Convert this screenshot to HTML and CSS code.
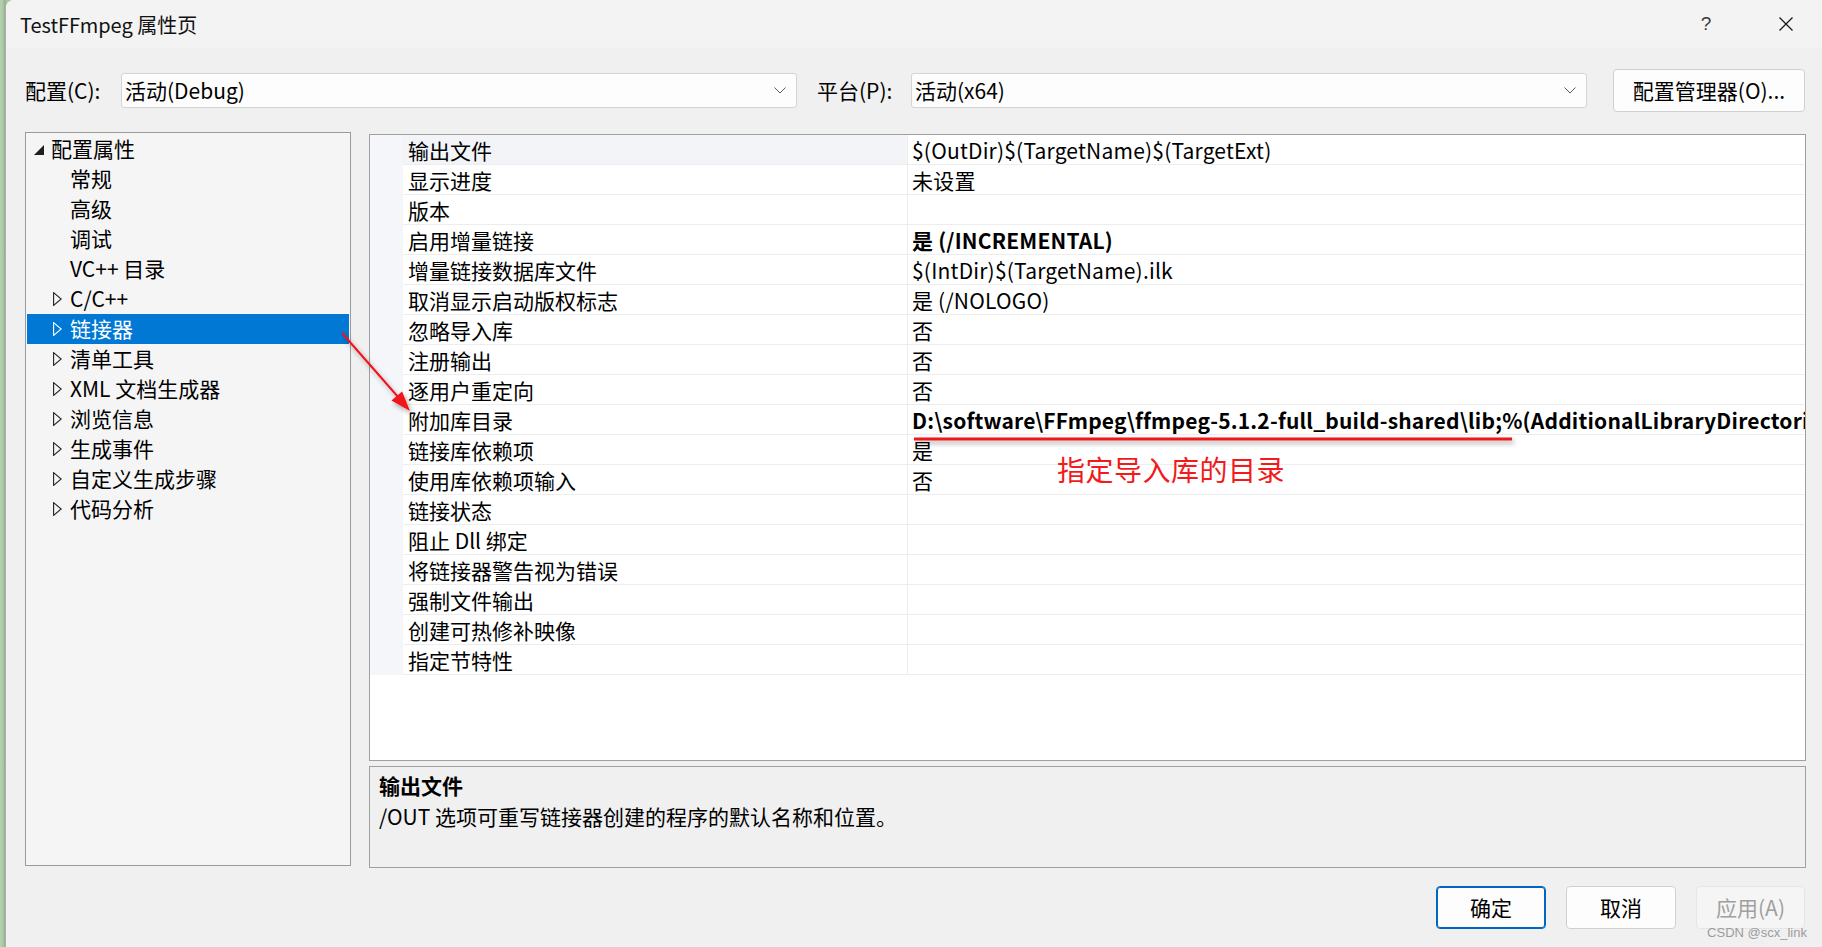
FILE: index.html
```html
<!DOCTYPE html>
<html lang="zh-CN">
<head>
<meta charset="utf-8">
<title>TestFFmpeg 属性页</title>
<link rel="stylesheet" href="styles.css">
</head>
<body>
<div class="screen">
  <div class="backdrop"></div>
  <div class="dialog">
    <div class="titlebar">
      <span class="title">TestFFmpeg 属性页</span>
      <span class="help">?</span>
      <span class="close">
        <svg width="16" height="16" viewBox="0 0 16 16"><path d="M1.5 1.5 L14.5 14.5 M14.5 1.5 L1.5 14.5" stroke="#1a1a1a" stroke-width="1.3" fill="none"/></svg>
      </span>
    </div>

    <div class="toolbar">
      <span class="lbl lbl-config">配置(C):</span>
      <div class="combo">
        <span class="combo-text">活动(Debug)</span>
        <svg class="chev" width="12" height="7" viewBox="0 0 12 7"><path d="M0.5 0.5 L6 6 L11.5 0.5" stroke="#5c5c5c" stroke-width="1" fill="none"/></svg>
      </div>
      <span class="lbl lbl-platform">平台(P):</span>
      <div class="combo">
        <span class="combo-text">活动(x64)</span>
        <svg class="chev" width="12" height="7" viewBox="0 0 12 7"><path d="M0.5 0.5 L6 6 L11.5 0.5" stroke="#5c5c5c" stroke-width="1" fill="none"/></svg>
      </div>
      <button class="btn btn-manager">配置管理器(O)...</button>
    </div>

    <div class="main">
      <div class="tree">
        <div class="tree-row lvl0">
          <span class="tw"><svg width="10" height="10" viewBox="0 0 10 10"><polygon points="10,0 10,10 0,10" fill="#1e1e1e"/></svg></span>
          <span class="tt">配置属性</span>
        </div>
        <div class="tree-row lvl1"><span class="tw"></span><span class="tt">常规</span></div>
        <div class="tree-row lvl1"><span class="tw"></span><span class="tt">高级</span></div>
        <div class="tree-row lvl1"><span class="tw"></span><span class="tt">调试</span></div>
        <div class="tree-row lvl1"><span class="tw"></span><span class="tt">VC++ 目录</span></div>
        <div class="tree-row lvl1"><span class="tw"><svg class="tri" width="9" height="14" viewBox="0 0 9 14"><polygon points="0.6,0.6 8.2,7 0.6,13.4" fill="none" stroke="#222" stroke-width="1.1"/></svg></span><span class="tt">C/C++</span></div>
        <div class="tree-row lvl1 selected"><span class="tw"><svg class="tri" width="9" height="14" viewBox="0 0 9 14"><polygon points="0.6,0.6 8.2,7 0.6,13.4" fill="none" stroke="#ffffff" stroke-width="1.1"/></svg></span><span class="tt">链接器</span></div>
        <div class="tree-row lvl1"><span class="tw"><svg class="tri" width="9" height="14" viewBox="0 0 9 14"><polygon points="0.6,0.6 8.2,7 0.6,13.4" fill="none" stroke="#222" stroke-width="1.1"/></svg></span><span class="tt">清单工具</span></div>
        <div class="tree-row lvl1"><span class="tw"><svg class="tri" width="9" height="14" viewBox="0 0 9 14"><polygon points="0.6,0.6 8.2,7 0.6,13.4" fill="none" stroke="#222" stroke-width="1.1"/></svg></span><span class="tt">XML 文档生成器</span></div>
        <div class="tree-row lvl1"><span class="tw"><svg class="tri" width="9" height="14" viewBox="0 0 9 14"><polygon points="0.6,0.6 8.2,7 0.6,13.4" fill="none" stroke="#222" stroke-width="1.1"/></svg></span><span class="tt">浏览信息</span></div>
        <div class="tree-row lvl1"><span class="tw"><svg class="tri" width="9" height="14" viewBox="0 0 9 14"><polygon points="0.6,0.6 8.2,7 0.6,13.4" fill="none" stroke="#222" stroke-width="1.1"/></svg></span><span class="tt">生成事件</span></div>
        <div class="tree-row lvl1"><span class="tw"><svg class="tri" width="9" height="14" viewBox="0 0 9 14"><polygon points="0.6,0.6 8.2,7 0.6,13.4" fill="none" stroke="#222" stroke-width="1.1"/></svg></span><span class="tt">自定义生成步骤</span></div>
        <div class="tree-row lvl1"><span class="tw"><svg class="tri" width="9" height="14" viewBox="0 0 9 14"><polygon points="0.6,0.6 8.2,7 0.6,13.4" fill="none" stroke="#222" stroke-width="1.1"/></svg></span><span class="tt">代码分析</span></div>
      </div>

      <div class="right">
        <div class="grid">
          <div class="prow current"><span class="gutter"></span><span class="pname">输出文件</span><span class="pval">$(OutDir)$(TargetName)$(TargetExt)</span></div>
          <div class="prow"><span class="gutter"></span><span class="pname">显示进度</span><span class="pval">未设置</span></div>
          <div class="prow"><span class="gutter"></span><span class="pname">版本</span><span class="pval"></span></div>
          <div class="prow"><span class="gutter"></span><span class="pname">启用增量链接</span><span class="pval bold">是 (/INCREMENTAL)</span></div>
          <div class="prow"><span class="gutter"></span><span class="pname">增量链接数据库文件</span><span class="pval">$(IntDir)$(TargetName).ilk</span></div>
          <div class="prow"><span class="gutter"></span><span class="pname">取消显示启动版权标志</span><span class="pval">是 (/NOLOGO)</span></div>
          <div class="prow"><span class="gutter"></span><span class="pname">忽略导入库</span><span class="pval">否</span></div>
          <div class="prow"><span class="gutter"></span><span class="pname">注册输出</span><span class="pval">否</span></div>
          <div class="prow"><span class="gutter"></span><span class="pname">逐用户重定向</span><span class="pval">否</span></div>
          <div class="prow"><span class="gutter"></span><span class="pname">附加库目录</span><span class="pval bold">D:\software\FFmpeg\ffmpeg-5.1.2-full_build-shared\lib;%(AdditionalLibraryDirectories)</span></div>
          <div class="prow"><span class="gutter"></span><span class="pname">链接库依赖项</span><span class="pval">是</span></div>
          <div class="prow"><span class="gutter"></span><span class="pname">使用库依赖项输入</span><span class="pval">否</span></div>
          <div class="prow"><span class="gutter"></span><span class="pname">链接状态</span><span class="pval"></span></div>
          <div class="prow"><span class="gutter"></span><span class="pname">阻止 Dll 绑定</span><span class="pval"></span></div>
          <div class="prow"><span class="gutter"></span><span class="pname">将链接器警告视为错误</span><span class="pval"></span></div>
          <div class="prow"><span class="gutter"></span><span class="pname">强制文件输出</span><span class="pval"></span></div>
          <div class="prow"><span class="gutter"></span><span class="pname">创建可热修补映像</span><span class="pval"></span></div>
          <div class="prow"><span class="gutter"></span><span class="pname">指定节特性</span><span class="pval"></span></div>
        </div>
        <div class="desc">
          <div class="desc-title">输出文件</div>
          <div class="desc-text">/OUT 选项可重写链接器创建的程序的默认名称和位置。</div>
        </div>
      </div>
    </div>

    <div class="footer">
      <button class="btn btn-ok">确定</button>
      <button class="btn btn-cancel">取消</button>
      <button class="btn btn-apply">应用(A)</button>
      <span class="watermark">CSDN @scx_link</span>
    </div>
  </div>

  <svg class="annot" width="1822" height="947" viewBox="0 0 1822 947">
    <defs>
      <filter id="sh" x="-20%" y="-20%" width="140%" height="140%">
        <feGaussianBlur in="SourceAlpha" stdDeviation="2.5"/>
        <feOffset dx="2" dy="3" result="b"/>
        <feComponentTransfer><feFuncA type="linear" slope="0.35"/></feComponentTransfer>
        <feMerge><feMergeNode/><feMergeNode in="SourceGraphic"/></feMerge>
      </filter>
    </defs>
    <g filter="url(#sh)">
      <line x1="342" y1="333" x2="399" y2="398" stroke="#f0121b" stroke-width="2"/>
      <polygon points="410,411 391.5,400.6 402.1,391.4" fill="#f0121b"/>
      <line x1="914" y1="439" x2="1512" y2="439" stroke="#f0121b" stroke-width="3"/>
    </g>
  </svg>
  <div class="annot-text">指定导入库的目录</div>
</div>
</body>
</html>
```

FILE: styles.css
```css
* { box-sizing: border-box; }

html, body {
  margin: 0;
  padding: 0;
}

body {
  width: 1822px;
  height: 947px;
  overflow: hidden;
  font-family: "Noto Sans CJK SC", "Noto Sans", sans-serif;
  font-size: 21px;
  color: #000;
  background: #a9c8a2;
}

.screen {
  position: relative;
  display: flex;
  width: 1822px;
  height: 947px;
}

.backdrop {
  width: 6px;
  flex: none;
  background: linear-gradient(90deg, #b4d2ae 0, #a5c59e 4px, #8e9a8b 5px, #c9c9c9 6px);
}

.dialog {
  flex: 1;
  display: flex;
  flex-direction: column;
  background: #f0f0f0;
  border-top-left-radius: 8px;
  overflow: hidden;
}

/* Title bar */
.titlebar {
  height: 48px;
  flex: none;
  display: flex;
  align-items: center;
  padding-left: 14px;
  background: #f3f3f3;
}

.title {
  font-size: 20px;
  color: #111;
}

.help {
  margin-left: auto;
  width: 20px;
  text-align: center;
  font-size: 19px;
  line-height: 20px;
  color: #3a3a3a;
  font-family: "Liberation Sans", sans-serif;
}

.close {
  display: flex;
  align-items: center;
  justify-content: center;
  width: 16px;
  height: 16px;
  margin-left: 62px;
  margin-right: 28px;
}

/* Toolbar */
.toolbar {
  height: 84px;
  flex: none;
  display: flex;
  align-items: center;
  padding-left: 19px;
}

.lbl {
  flex: none;
  line-height: 30px;
}

.lbl-config { width: 96px; }
.lbl-platform { width: 94px; margin-left: 20px; }

.combo {
  width: 676px;
  height: 35px;
  flex: none;
  display: flex;
  align-items: center;
  padding-left: 3px;
  padding-right: 10px;
  background: #fdfdfd;
  border: 1px solid #d4d4d4;
  border-radius: 3px;
}

.combo-text { flex: 1; }

.chev { flex: none; }

.btn {
  font-family: "Noto Sans CJK SC", "Noto Sans", sans-serif;
  font-size: 21px;
  color: #000;
  background: #fdfdfd;
  border: 1px solid #d0d0d0;
  border-radius: 4px;
  height: 43px;
  padding: 0;
  line-height: 1;
}

.btn-manager {
  width: 192px;
  margin-left: 26px;
  flex: none;
}

/* Main */
.main {
  height: 736px;
  flex: none;
  display: flex;
  padding-left: 19px;
}

.tree {
  width: 326px;
  height: 734px;
  flex: none;
  background: #f5f5f5;
  border: 1px solid #9b9b9b;
  padding: 1px 1px;
}

.tree-row {
  height: 30px;
  display: flex;
  align-items: center;
  white-space: nowrap;
}

.tt {
  position: relative;
  top: -1px;
}

.tree-row.lvl0 { padding-left: 7px; }
.tree-row.lvl0 .tw { width: 17px; align-items: flex-end; height: 20px; padding-bottom: 4px; }
.tree-row.lvl1 { padding-left: 26px; }
.tree-row.lvl1 .tw { width: 17px; }

.tw {
  display: flex;
  align-items: center;
  flex: none;
}

.tree-row.selected {
  background: #0078d4;
  color: #fff;
}

.right {
  width: 1437px;
  flex: none;
  margin-left: 18px;
  margin-top: 2px;
  display: flex;
  flex-direction: column;
}

.grid {
  height: 627px;
  flex: none;
  background: #fff;
  border: 1px solid #a0a0a0;
  overflow: hidden;
}

.prow {
  display: flex;
  height: 30px;
}

.gutter {
  width: 33px;
  flex: none;
  background: #f4f6fa;
}

.pname {
  width: 505px;
  flex: none;
  height: 30px;
  padding-left: 5px;
  padding-top: 2px;
  line-height: 27px;
  border-bottom: 1px solid #ededed;
  border-right: 1px solid #ededed;
  white-space: nowrap;
}

.prow.current .pname {
  background: #f2f4f8;
}

.pval {
  flex: 1;
  height: 30px;
  padding-left: 4px;
  padding-top: 2px;
  line-height: 27px;
  border-bottom: 1px solid #ededed;
  white-space: nowrap;
  overflow: hidden;
  letter-spacing: 0.2px;
}

.pval.bold { font-weight: 700; }

.desc {
  margin-top: 5px;
  height: 102px;
  flex: none;
  background: #f0f0f0;
  border: 1px solid #a0a0a0;
  padding: 3px 9px;
}

.desc-title {
  font-weight: 700;
  line-height: 30px;
}

.desc-text {
  line-height: 32px;
}

/* Footer */
.footer {
  position: relative;
  flex: 1;
  display: flex;
  justify-content: flex-end;
  align-items: flex-start;
  gap: 20px;
  padding-top: 18px;
  padding-right: 17px;
}

.btn-ok {
  width: 110px;
  border: 1px solid #0067c0;
  box-shadow: inset 0 0 0 1px #0067c0;
}

.btn-cancel { width: 110px; }

.btn-apply {
  width: 109px;
  color: #a0a0a0;
  background: #f5f5f5;
  border-color: #e6e6e6;
}

.watermark {
  position: absolute;
  right: 15px;
  bottom: 7px;
  font-family: "Liberation Sans", sans-serif;
  font-size: 13px;
  color: #9c9c9c;
}

/* Annotation overlay */
.annot {
  position: absolute;
  left: 0;
  top: 0;
  pointer-events: none;
}

.annot-text {
  position: absolute;
  left: 1057px;
  top: 451px;
  font-size: 28px;
  line-height: 36px;
  color: #f21a1a;
  letter-spacing: 0.5px;
}
```
